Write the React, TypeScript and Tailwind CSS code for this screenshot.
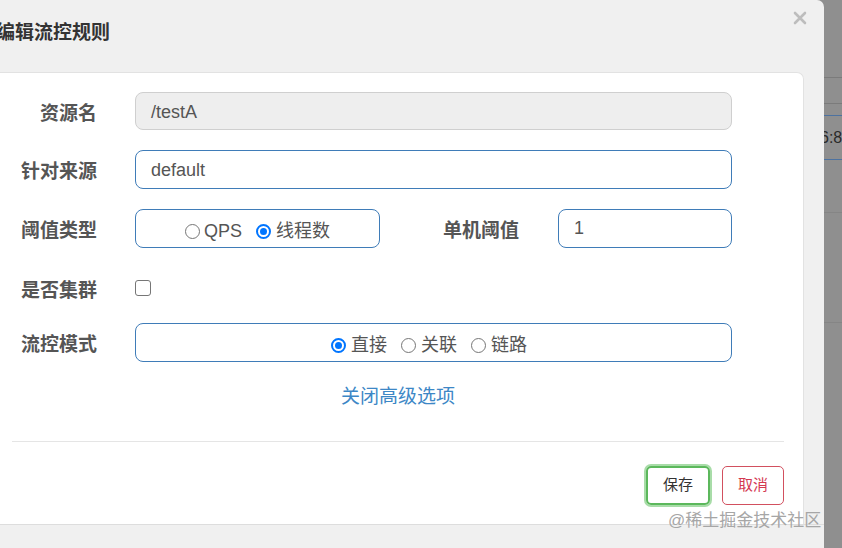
import React from 'react';

function Radio({ checked }: { checked?: boolean }) {
  return checked ? (
    <span className="flex w-[15px] h-[15px] rounded-full border-[2px] border-[#0075ff] items-center justify-center shrink-0">
      <span className="w-[7px] h-[7px] rounded-full bg-[#0075ff]"></span>
    </span>
  ) : (
    <span className="flex w-[15px] h-[15px] rounded-full border border-[#767676] bg-white shrink-0"></span>
  );
}

function Label({ text }: { text: string }) {
  return (
    <div className="w-[97px] shrink-0 pt-[5px] text-right text-[19px] font-bold text-[#555] leading-[24px]">
      {text}
    </div>
  );
}

export default function App() {
  return (
    <div className="relative w-[842px] h-[548px] flex bg-[#8f8f8f] overflow-hidden font-['Liberation_Sans','Noto_Sans_CJK_SC',sans-serif]">
      {/* Modal */}
      <div className="w-[824px] shrink-0 h-full bg-[#f0f0f0] rounded-tr-[7px] flex flex-col">
        {/* Header */}
        <div className="relative h-[72px] shrink-0 pt-[22px]">
          <h4 className="-ml-[4px] text-[19px] leading-[22px] font-bold text-[#333]">编辑流控规则</h4>
          <svg className="absolute right-[17px] top-[11px]" width="14" height="14" viewBox="0 0 14 14">
            <path d="M2 2L12 12M12 2L2 12" stroke="#bdbdbd" strokeWidth="2.6" strokeLinecap="round" />
          </svg>
        </div>

        {/* Body card */}
        <div className="mr-[20px] h-[452px] shrink-0 bg-white rounded-tr-[7px] border-t border-r border-[#e2e2e2] flex flex-col pt-[19px]">
          {/* 资源名 */}
          <div className="flex items-center h-[38px]">
            <Label text="资源名" />
            <div className="ml-[38px] w-[597px] h-[38px] rounded-[8px] border border-[#cfcfcf] bg-[#eeeeee] px-[15px] pt-[2px] flex items-center text-[18px] text-[#555]">
              /testA
            </div>
          </div>

          {/* 针对来源 */}
          <div className="flex items-center h-[39px] mt-[20px]">
            <Label text="针对来源" />
            <div className="ml-[38px] w-[597px] h-[39px] rounded-[8px] border border-[#3f7cb8] bg-white px-[15px] pt-[2px] flex items-center text-[18px] text-[#555]">
              default
            </div>
          </div>

          {/* 阈值类型 / 单机阈值 */}
          <div className="flex items-center h-[39px] mt-[20px]">
            <Label text="阈值类型" />
            <div className="ml-[38px] w-[245px] h-[39px] rounded-[8px] border border-[#3f7cb8] pt-[5px] flex items-center justify-center text-[18px] text-[#555]">
              <Radio />
              <span className="ml-[4px]">QPS</span>
              <span className="ml-[14px] flex"><Radio checked /></span>
              <span className="ml-[5px]">线程数</span>
            </div>
            <div className="ml-[63px] w-[78px] pt-[5px] text-[19px] font-bold text-[#555] leading-[24px] whitespace-nowrap">单机阈值</div>
            <div className="ml-[37px] w-[174px] h-[39px] rounded-[8px] border border-[#3f7cb8] bg-white px-[15px] flex items-center text-[18px] text-[#555]">
              1
            </div>
          </div>

          {/* 是否集群 */}
          <div className="flex items-center h-[38px] mt-[21px]">
            <Label text="是否集群" />
            <span className="ml-[38px] w-[16px] h-[16px] rounded-[3px] border border-[#767676] bg-white"></span>
          </div>

          {/* 流控模式 */}
          <div className="flex items-center h-[39px] mt-[16px]">
            <Label text="流控模式" />
            <div className="ml-[38px] w-[597px] h-[39px] rounded-[8px] border border-[#3f7cb8] pt-[5px] flex items-center justify-center pr-[9px] text-[18px] text-[#555]">
              <Radio checked />
              <span className="ml-[5px]">直接</span>
              <span className="ml-[14px] flex"><Radio /></span>
              <span className="ml-[5px]">关联</span>
              <span className="ml-[14px] flex"><Radio /></span>
              <span className="ml-[5px]">链路</span>
            </div>
          </div>

          {/* advanced toggle */}
          <div className="mt-[25px] flex justify-center pr-[7px]">
            <span className="text-[19px] leading-[20px] text-[#3d87c6]">关闭高级选项</span>
          </div>

          <div className="mt-[34px] ml-[12px] mr-[19px] h-px bg-[#e5e5e5]"></div>

          {/* footer buttons */}
          <div className="mt-[24px] flex justify-end gap-[12px] pr-[19px]">
            <button className="w-[64px] h-[39px] rounded-[5px] border-[2px] border-[#5cb85c] ring-[2px] ring-[#a8dca8] text-[15px] text-[#333]">
              保存
            </button>
            <button className="w-[62px] h-[39px] rounded-[5px] border border-[#d2505f] text-[15px] text-[#d43852]">
              取消
            </button>
          </div>
        </div>
        <div className="flex-1 border-t border-[#dddddd]"></div>
      </div>

      {/* page behind the backdrop */}
      <div className="flex-1 flex flex-col overflow-hidden">
        <div className="h-[77px] shrink-0"></div>
        <div className="h-px bg-[#7b7b7b]"></div>
        <div className="h-[25px] shrink-0"></div>
        <div className="h-px bg-[#7b7b7b]"></div>
        <div className="h-[11px] shrink-0"></div>
        <div className="h-px bg-[#4d72a0]"></div>
        <div className="h-[43px] shrink-0 flex items-center -ml-[4px] text-[16px] text-[#2a2a2a] whitespace-nowrap">6:8</div>
        <div className="h-px bg-[#4d72a0]"></div>
        <div className="h-[52px] shrink-0"></div>
        <div className="h-px bg-[#858585]"></div>
        <div className="h-[109px] shrink-0"></div>
        <div className="h-px bg-[#858585]"></div>
      </div>

      {/* watermark */}
      <div className="absolute left-[668px] top-[510px] text-[17px] leading-[22px] text-[#a6a6a6] whitespace-nowrap">
        @稀土掘金技术社区
      </div>
    </div>
  );
}
